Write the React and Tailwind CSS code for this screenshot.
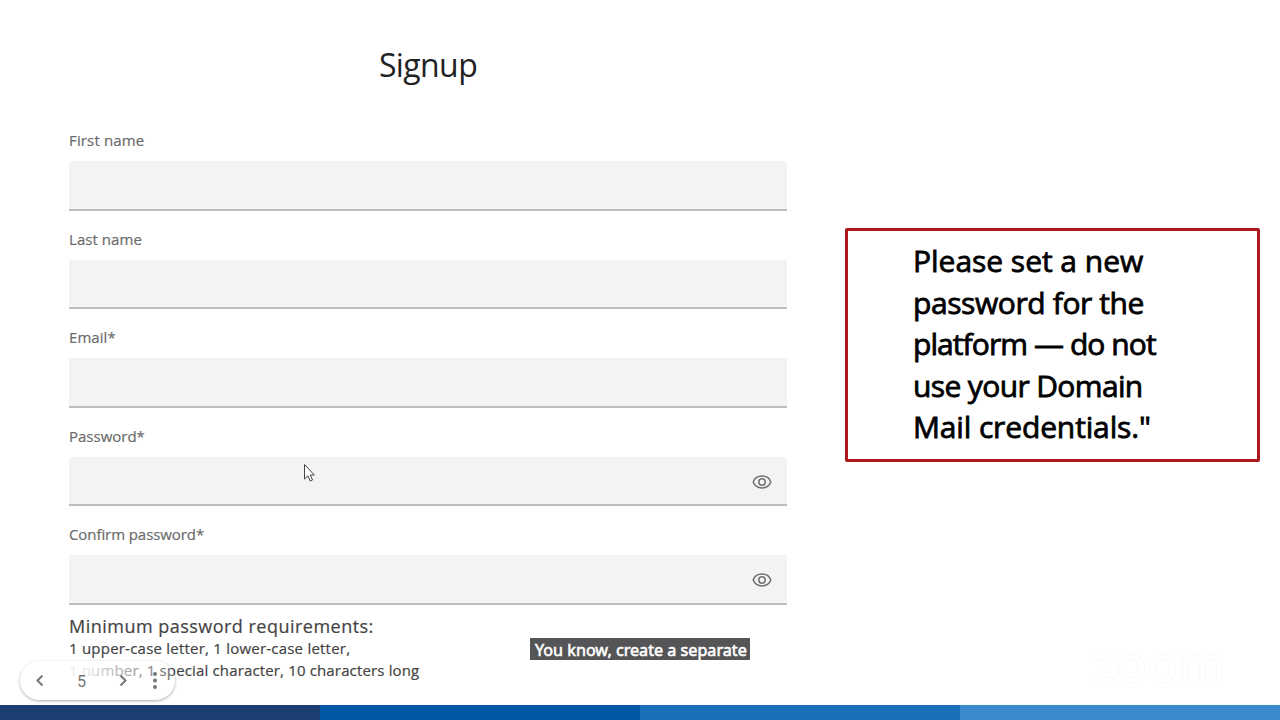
import React from "react";

const fields = [
  { label: "First name", tracking: "tracking-[0.15px]" },
  { label: "Last name", tracking: "tracking-[0.05px]" },
  { label: "Email*", tracking: "tracking-[0.05px]" },
  { label: "Password*", tracking: "tracking-[0px]", secret: true },
  { label: "Confirm password*", tracking: "tracking-[-0.08px]", secret: true },
];

const calloutLines = [
  { text: "Please set a new", tracking: "tracking-[-0.03px]" },
  { text: "password for the", tracking: "tracking-[-0.4px]" },
  { text: "platform — do not", tracking: "tracking-[-0.92px]" },
  { text: "use your Domain", tracking: "tracking-[-0.63px]" },
  { text: 'Mail credentials."', tracking: "tracking-[-0.14px]" },
];

function EyeIcon() {
  return (
    <svg className="mt-[3px] h-5 w-5" viewBox="0 0 20 20" fill="none" stroke="#707070" strokeWidth="1.5">
      <path d="M1.200 10C2.600 6.200 6 4.100 10 4.100S17.400 6.200 18.800 10C17.400 13.800 14 15.900 10 15.900S2.600 13.800 1.200 10Z" />
      <circle cx="10" cy="10" r="3.200" />
    </svg>
  );
}

function Field({ label, tracking, secret }) {
  return (
    <div className="h-[98.5px]">
      <div className={`h-[30px] whitespace-nowrap text-[15px] leading-[18px] text-[#6b6b6b] [-webkit-text-stroke:0.2px_#6b6b6b] ${tracking}`}>
        <span>{label}</span>
      </div>
      <div className="flex h-[49.5px] items-center justify-end border-b-2 border-[#bdbdbd] bg-[#f3f3f3] pr-[15px]">
        {secret && <EyeIcon />}
      </div>
    </div>
  );
}

export default function App() {
  return (
    <div className="relative flex h-[720px] w-[1280px] flex-col overflow-hidden bg-white font-['Open_Sans',sans-serif]">
      <div className="flex h-[705px]">
        <main className="ml-[69px] w-[718px] pt-11">
          <h1 className="h-[87px] text-center text-[32px] leading-[42px] tracking-[-0.6px] text-[#222222]">
            <span>Signup</span>
          </h1>
          {fields.map((f) => (
            <Field key={f.label} {...f} />
          ))}
          <div className="-mt-[9px] whitespace-nowrap text-[15px] leading-[22px] text-[#444444] [-webkit-text-stroke:0.2px_#444444]">
            <p className="text-[18px] leading-[22px] tracking-[0.48px]"><span>Minimum password requirements:</span></p>
            <p className="tracking-[0.22px]"><span>1 upper-case letter, 1 lower-case letter,</span></p>
            <p className="tracking-[0.15px]"><span>1 number, 1 special character, 10 characters long</span></p>
          </div>
        </main>
        <aside className="ml-[58px] mt-[228px] h-[234px] w-[415px] rounded-[2px] border-[3px] border-[#ac191d] pl-[65px] pt-[9px] text-[30px] leading-[41.6px] text-black [-webkit-text-stroke:0.8px_black]">
          {calloutLines.map((l) => (
            <p key={l.text} className={`whitespace-nowrap ${l.tracking}`}><span>{l.text}</span></p>
          ))}
        </aside>
      </div>
      <footer className="grid h-[15px] grid-cols-4">
        <div className="bg-[#1b3f73]" />
        <div className="bg-[#0357a4]" />
        <div className="bg-[#1c70b9]" />
        <div className="bg-[#3b8bcc]" />
      </footer>

      <svg className="absolute left-[303px] top-[463px] h-5 w-3" viewBox="0 0 12 20">
        <path d="M1.500 1.500V16L5 12.800L7.200 18L9.500 17L7.300 12H11.300Z" fill="#fff" stroke="#444" strokeWidth="1" />
      </svg>

      <div className="absolute left-[20px] top-[661px] flex h-[39px] w-[155px] items-center rounded-full bg-linear-to-r from-white/90 from-40% to-white/20 text-[#777777] shadow-[0_1px_3px_rgba(0,0,0,0.35)]">
        <svg className="h-10 w-[155px]" viewBox="0 0 155 40" fill="none" stroke="#777" strokeWidth="2">
          <path d="M22.500 14.500L17.500 19.500L22.500 24.500M100.500 14.500L105.500 19.500L100.500 24.500" />
          <g fill="#777" stroke="none"><circle cx="135" cy="13" r="2" /><circle cx="135" cy="19.500" r="2" /><circle cx="135" cy="26" r="2" /></g>
        </svg>
        <span className="absolute left-[57px] top-[9px] font-['Roboto',sans-serif] text-[16px] leading-6">5</span>
      </div>

      <div className="absolute left-[530px] top-[638px] h-[22px] w-[220px] whitespace-nowrap bg-[#555557] pl-[5px] font-['Noto_Sans',sans-serif] text-[17px] leading-6 text-white [-webkit-text-stroke:0.6px_white]">
        <span className="inline-block origin-left scale-x-[0.95]">You know, create a separate</span>
      </div>

      <div className="absolute left-[1092px] top-[636px] font-['Open_Sans',sans-serif] text-[50px] font-semibold leading-[54px] tracking-[0.5px] text-white [text-shadow:0_0_1px_#e4e4e4]">
        zoom
      </div>
    </div>
  );
}
